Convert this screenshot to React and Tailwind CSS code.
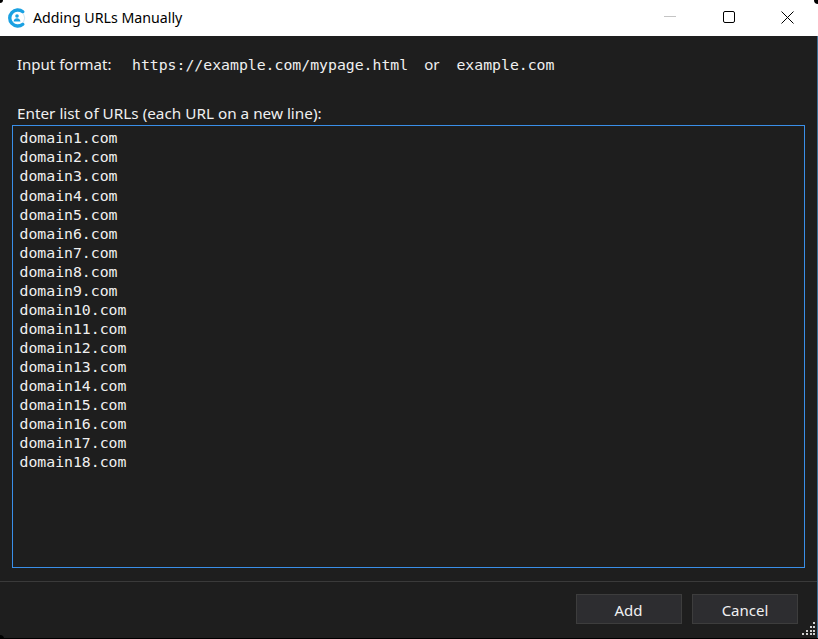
const UI = { fontFamily: '"Noto Sans", "Open Sans", sans-serif' };
const MONO = { fontFamily: '"DejaVu Sans Mono", "Liberation Mono", monospace' };
const urls = Array.from({ length: 18 }, (_, i) => `domain${i + 1}.com`);
const pos = [0, 4, 8, 11];
const grip = [[3,0],[2,1],[3,1],[1,2],[2,2],[3,2],[0,3],[1,3],[2,3],[3,3]];

function Logo() {
  return (
    <svg width="20" height="20" viewBox="0 0 20 20" fill="none">
      <path d="M15.800 3.800A8 8 0 1 0 15.800 16.200" stroke="#1ba1e2" strokeWidth="3.400" strokeLinecap="round" />
      <path d="M16.500 6A7.500 7.500 0 0 1 16.500 14" stroke="#cfe6f2" strokeWidth="1" />
      <circle cx="10" cy="8" r="1.800" fill="#1ba1e2" />
      <path d="M6.500 13.500c.4-2.400 1.900-3.200 3.500-3.200s3.100.8 3.500 3.200z" fill="#1ba1e2" />
    </svg>
  );
}

export default function App() {
  return (
    <div className="relative flex h-[639px] w-[818px] flex-col overflow-hidden bg-[#1e1e1e] text-[#f0f0f0]" style={UI}>
      <header className="flex h-[36px] shrink-0 items-center bg-white pl-[7px] text-black">
        <Logo />
        <span className="ml-[6px] text-[14.200px]">Adding URLs Manually</span>
        <div className="ml-auto flex items-center pr-[2px]">
          <div className="flex h-[36px] w-[59px] items-center justify-center pb-[4px]">
            <div className="h-px w-[12px] bg-[#c4c4c4]" />
          </div>
          <div className="flex h-[36px] w-[59px] items-center justify-center pb-[2px]">
            <div className="h-[12px] w-[12px] rounded-[2px] border border-black" />
          </div>
          <div className="flex h-[36px] w-[58px] items-center justify-center pb-[2px]">
            <svg width="13" height="13" viewBox="0 0 13 13" stroke="black" strokeWidth="1"><path d="M.5.5l12 12M12.500.5l-12 12" /></svg>
          </div>
        </div>
      </header>

      <main className="flex min-h-0 flex-1 flex-col px-[12px]">
        <div className="mt-[18px] flex h-[20px] items-center pl-[5px] text-[15px]">
          <span>Input format:</span>
          <span className="ml-[20.500px] mt-[2px] text-[14.800px]" style={MONO}>https://example.com/mypage.html</span>
          <span className="ml-[16px]">or</span>
          <span className="ml-[17px] mt-[2px] text-[14.800px]" style={MONO}>example.com</span>
        </div>
        <label className="mt-[29px] h-[20px] pl-[5px] text-[15.300px] leading-[20px]">Enter list of URLs (each URL on a new line):</label>
        <div className="mt-[2px] h-[443px] w-[793px] border border-[#3a8fe8] pl-[6.500px] pt-[2.320px] text-[14.800px] leading-[19.060px] text-[#f0f0f0]" style={MONO}>
          {urls.map((u) => <div key={u}>{u}</div>)}
        </div>
      </main>

      <footer className="mb-[2px] flex h-[56px] shrink-0 items-center justify-end gap-[10px] border-t border-[#3a3a3a] pr-[20px] pb-[1px]">
        <button className="h-[30px] w-[106px] border border-[#3d3d3d] bg-[#2d2d30] pr-[1px] pt-[2px] text-[15px] text-[#f0f0f0]">Add</button>
        <button className="h-[30px] w-[106px] border border-[#3d3d3d] bg-[#2d2d30] pt-[2px] text-[15px] text-[#f0f0f0]">Cancel</button>
      </footer>

      <div className="absolute bottom-[4px] right-[3px] h-[13px] w-[13px]">
        {grip.map(([x, y]) => (
          <span key={`${x}-${y}`} className="absolute h-[2px] w-[2px] bg-[#d0d0d0]" style={{ left: pos[x], top: pos[y] }} />
        ))}
      </div>
      <div className="absolute bottom-0 right-0 top-[36px] w-px bg-[#3c6f94]" />
      <div className="absolute inset-x-0 bottom-0 h-px bg-black" />
      <div className="absolute bottom-0 left-0 h-[4px] w-[4px] rounded-tr-[4px] bg-black" />
      <div className="absolute left-0 top-0 h-[3px] w-[3px] rounded-br-[3px] bg-black" />
      <div className="absolute right-0 top-0 h-[4px] w-[4px] rounded-bl-[4px] bg-black" />
    </div>
  );
}
